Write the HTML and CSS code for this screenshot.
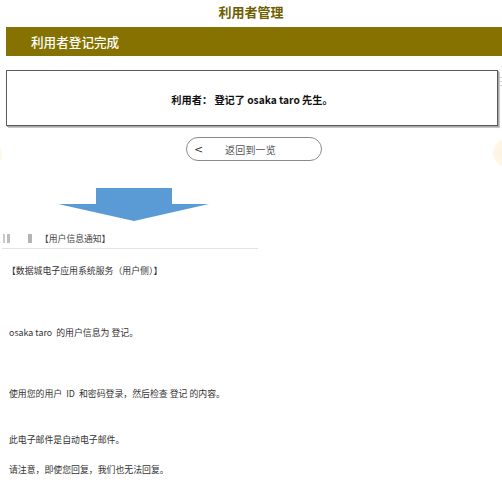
FILE: index.html
```html
<!DOCTYPE html>
<html lang="zh">
<head>
<meta charset="utf-8">
<title>利用者管理</title>
<link rel="stylesheet" href="styles.css">
</head>
<body>
<div class="page">
  <div class="deco deco-right"></div>
  <div class="deco deco-left"></div>
  <div class="deco-dots"><span></span><span></span><span></span></div>

  <h1 class="title">利用者管理</h1>
  <div class="bar">利用者登记完成</div>
  <div class="box">
    <p class="message">利用者： 登记了 osaka taro 先生。</p>
  </div>
  <div class="back-row">
    <a class="back-btn" href="#"><span class="chev">&lt;</span><span class="back-label">返回到一览</span></a>
  </div>

  <div class="arrow-row">
    <svg class="arrow" width="152" height="34" viewBox="0 0 152 34">
      <polygon points="38,0 114,0 114,16 151,16 76,33 0,16 38,16" fill="#5b9bd5"/>
    </svg>
  </div>

  <div class="mail">
    <div class="mail-head">
      <span class="frag frag-a"></span><span class="frag frag-b"></span><span class="frag frag-c"></span>
      <span class="mail-subject">【用户信息通知】</span>
    </div>
    <p class="mail-line l1">【数据城电子应用系统服务（用户侧）】</p>
    <p class="mail-line l2">osaka taro&nbsp; 的用户信息为&nbsp;登记。</p>
    <p class="mail-line l3">使用您的用户&nbsp; ID&nbsp; 和密码登录，然后检查 登记&nbsp;的内容。</p>
    <p class="mail-line l4">此电子邮件是自动电子邮件。</p>
    <p class="mail-line l5">请注意，即使您回复，我们也无法回复。</p>
  </div>
</div>
</body>
</html>
```

FILE: styles.css
```css
html, body {
  margin: 0;
  padding: 0;
  background: #ffffff;
}

body {
  font-family: "Noto Sans CJK SC", "Noto Sans", sans-serif;
  color: #333333;
}

.page {
  position: relative;
  width: 502px;
  height: 487px;
  overflow: hidden;
}

.deco {
  position: absolute;
  border-radius: 50%;
  background: radial-gradient(circle, #fdf1d6 0%, #fef6e6 60%, #fffaf2 100%);
}

.deco-right {
  left: 493px;
  top: 139px;
  width: 28px;
  height: 28px;
}

.deco-left {
  left: -26px;
  top: 141px;
  width: 28px;
  height: 28px;
}

.deco-dots {
  position: absolute;
  left: 500px;
  top: 77px;
  display: flex;
  flex-direction: column;
  gap: 3px;
}

.deco-dots span {
  display: block;
  width: 3px;
  height: 1px;
  background: #cfcfcf;
}

.title {
  margin: 0;
  height: 27px;
  line-height: 24px;
  text-align: center;
  font-size: 13px;
  font-weight: 700;
  color: #6f5e00;
}

.bar {
  margin-left: 6px;
  height: 29px;
  line-height: 29px;
  padding-left: 25px;
  background: #857200;
  color: #ffffff;
  font-size: 12.6px;
  font-weight: 500;
}

.box {
  margin: 14px 4px 0 6px;
  height: 54px;
  border: 1px solid #5a5a5a;
  box-shadow: 1px 1px 0 #a8a8a8, 2px 2px 0 #c8c8c8;
  display: flex;
  align-items: center;
  justify-content: center;
}

.message {
  margin: 2px 0 0 0;
  font-size: 10.2px;
  font-weight: 700;
  color: #111111;
}

.back-row {
  margin-top: 11px;
  display: flex;
  justify-content: flex-start;
  padding-left: 186px;
}

.back-btn {
  box-sizing: border-box;
  width: 136px;
  height: 24px;
  border: 1px solid #8a8a8a;
  border-radius: 12px;
  display: flex;
  align-items: center;
  text-decoration: none;
  color: #555555;
  font-size: 10px;
}

.chev {
  width: 32px;
  padding-left: 7px;
  box-sizing: border-box;
  font-family: "DejaVu Sans", sans-serif;
  font-size: 11px;
  color: #333333;
}

.back-label {
  margin-left: 6px;
  letter-spacing: 0.2px;
}

.arrow-row {
  margin-top: 27px;
  padding-left: 58px;
  height: 34px;
}

.arrow {
  display: block;
}

.mail {
  padding-left: 2px;
}

.mail-head {
  margin-top: 6px;
  width: 256px;
  height: 20px;
  border-bottom: 1px solid #e2e2e2;
  display: flex;
  align-items: center;
  font-size: 8.8px;
  color: #444444;
}

.frag {
  display: block;
  height: 9px;
  background: #c9c9c9;
}

.frag-a {
  width: 2px;
  margin-left: 1px;
}

.frag-b {
  width: 3px;
  margin-left: 2px;
  background: #bdbdbd;
}

.frag-c {
  width: 4px;
  margin-left: 18px;
  background: #b5b5b5;
}

.mail-subject {
  margin-left: 8px;
}

.mail-line {
  margin: 0;
  padding-left: 6px;
  font-size: 8.9px;
  line-height: 12px;
  color: #333333;
}

.l1 { margin-top: 16px; padding-left: 5px; }
.l2 { margin-top: 50px; padding-left: 7px; }
.l3 { margin-top: 49px; padding-left: 7px; }
.l4 { margin-top: 34px; padding-left: 7px; }
.l5 { margin-top: 18px; padding-left: 7px; }
```
